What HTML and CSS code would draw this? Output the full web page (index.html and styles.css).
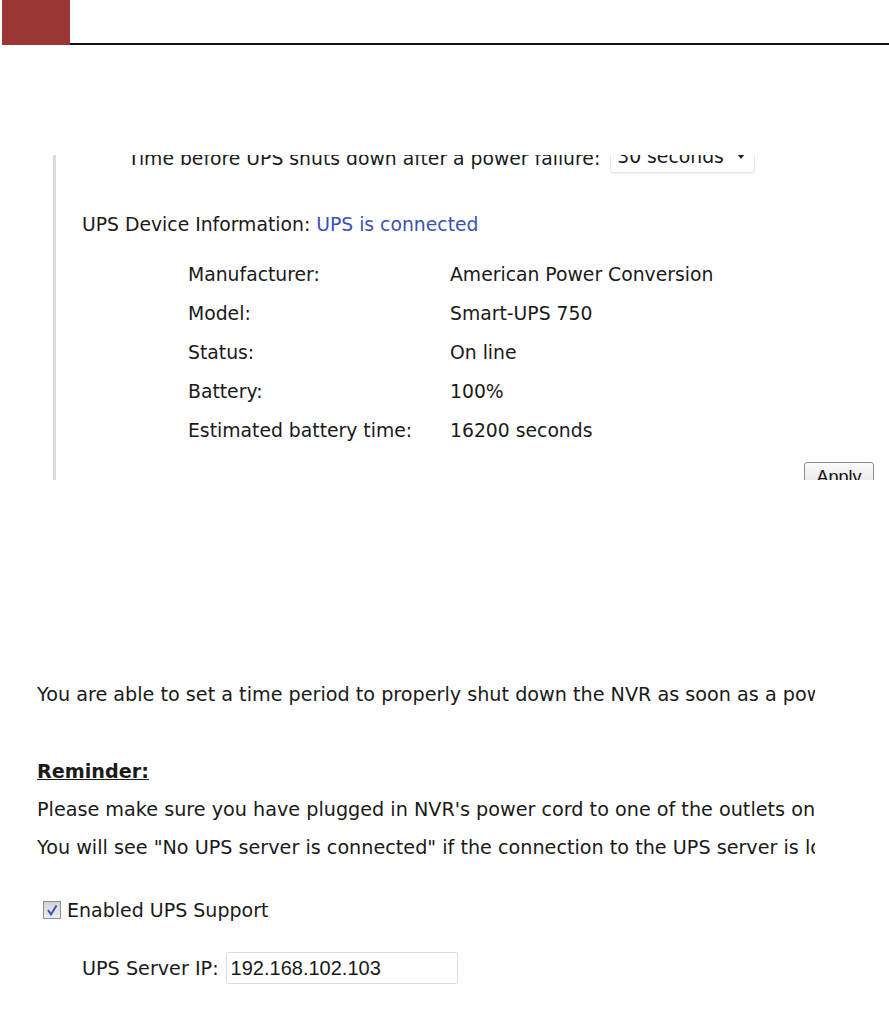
FILE: index.html
```html
<!DOCTYPE html>
<html lang="en">

<head>
    <meta http-equiv="Content-Type" content="text/html; charset=UTF-8" />
    <title>UPS Settings</title>
    <link rel="stylesheet" href="styles.css">
</head>

<body>
    <div class="pageHeader">
        <div class="pageMark"></div>
        <div class="pageRule"></div>
    </div>

    <!-- screenshot of the UPS panel, cropped top and bottom -->
    <div class="shot">
        <div class="shotInner">
            <div class="shutdownRow">
                <span>Time before UPS shuts down after a power failure:</span>
                <span class="fakeSelect">30 seconds<span class="caret"></span></span>
            </div>
            <div class="deviceRow">
                UPS Device Information: <span class="statusLink">UPS is connected</span>
            </div>
            <div class="infoList">
                <div class="infoLabel">Manufacturer:</div>
                <div class="infoValue">American Power Conversion</div>
                <div class="infoLabel">Model:</div>
                <div class="infoValue">Smart-UPS 750</div>
                <div class="infoLabel">Status:</div>
                <div class="infoValue">On line</div>
                <div class="infoLabel">Battery:</div>
                <div class="infoValue">100%</div>
                <div class="infoLabel">Estimated battery time:</div>
                <div class="infoValue">16200 seconds</div>
            </div>
            <div class="applyRow">
                <button class="applyButton">Apply</button>
            </div>
        </div>
    </div>

    <div class="doc">
        <p class="docLine">You are able to set a time period to properly shut down the NVR as soon as a power failure occurs.</p>
        <p class="docLine reminder"><b><u>Reminder:</u></b></p>
        <p class="docLine tight">Please make sure you have plugged in NVR's power cord to one of the outlets on the UPS.</p>
        <p class="docLine tight">You will see "No UPS server is connected" if the connection to the UPS server is lost.</p>

        <div class="checkRow">
            <span class="fakeCheck">
                <svg width="14" height="14" viewBox="0 0 14 14">
                    <path d="M3 7 L6 11.5 L11.5 2.5" fill="none" stroke="#3a52c8" stroke-width="2" />
                </svg>
            </span>
            <span>Enabled UPS Support</span>
        </div>

        <div class="ipRow">
            <span>UPS Server IP:</span>
            <span class="fakeInput">192.168.102.103</span>
        </div>
    </div>
</body>

</html>
```

FILE: styles.css
```css
body {
    margin: 0;
    background: #ffffff;
    color: #1a1a1a;
    font-family: "DejaVu Sans", Verdana, sans-serif;
    font-size: 18.8px;
}

.pageHeader {
    display: flex;
    height: 45px;
}
.pageMark {
    width: 68px;
    height: 45px;
    margin-left: 2px;
    background: #9a3634;
}
.pageRule {
    flex: 1;
    height: 43px;
    border-bottom: 2px solid #111111;
}

/* cropped panel screenshot */
.shot {
    margin-top: 110px;
    margin-left: 53px;
    height: 325px;
    overflow: hidden;
    border-left: 3px solid #dcdcdc;
}
.shotInner {
    margin-top: -10px;
}
.shutdownRow {
    display: flex;
    align-items: center;
    height: 26px;
    padding-left: 72px;
    white-space: nowrap;
}
.fakeSelect {
    position: relative;
    display: inline-block;
    box-sizing: border-box;
    width: 145px;
    height: 27px;
    margin-left: 10px;
    margin-top: 2px;
    padding: 0 0 0 6px;
    line-height: 20px;
    border: 1px solid #e4e7ee;
    border-radius: 3px;
    box-shadow: 0 1px 1px #eef0f5;
}
.caret {
    position: absolute;
    right: 9px;
    top: 7px;
    border-left: 4px solid transparent;
    border-right: 4px solid transparent;
    border-top: 5px solid #222222;
}
.deviceRow {
    height: 26px;
    line-height: 26px;
    margin-top: 41px;
    padding-left: 26px;
}
.statusLink {
    color: #3b52b4;
}
.infoList {
    display: grid;
    grid-template-columns: 262px auto;
    grid-auto-rows: 39px;
    align-items: center;
    margin-top: 17px;
    padding-left: 132px;
}
.applyRow {
    display: flex;
    justify-content: flex-end;
    margin-top: 12px;
    padding-right: 15px;
}
.applyButton {
    width: 70px;
    height: 30px;
    font-family: "Liberation Sans", Arial, sans-serif;
    font-size: 18px;
    color: #111111;
    background: linear-gradient(#fafafa, #e4e4e4);
    border: 1px solid #8d8d8d;
    border-radius: 3px;
    padding: 0;
}

/* manual text */
.doc {
    width: 778px;
    margin-left: 37px;
    margin-top: 202px;
    overflow: hidden;
    white-space: nowrap;
    font-size: 19.2px;
}
.docLine {
    margin: 0;
    height: 26px;
    line-height: 26px;
}
.reminder {
    margin-top: 51px;
}
.tight {
    margin-top: 12px;
}
.checkRow {
    display: flex;
    align-items: center;
    height: 26px;
    margin-top: 36px;
    padding-left: 6px;
    font-size: 19px;
}
.fakeCheck {
    display: inline-flex;
    align-items: center;
    justify-content: center;
    box-sizing: border-box;
    width: 18px;
    height: 18px;
    margin-right: 6px;
    border: 1px solid #8e8f8f;
    background: linear-gradient(#d2d2d2, #efefef);
}
.ipRow {
    display: flex;
    align-items: center;
    height: 32px;
    margin-top: 29px;
    padding-left: 45px;
}
.fakeInput {
    box-sizing: border-box;
    width: 232px;
    height: 32px;
    margin-left: 7px;
    padding-left: 4px;
    line-height: 30px;
    font-family: "Liberation Sans", Arial, sans-serif;
    font-size: 20px;
    border: 1px solid #dadde3;
    border-radius: 2px;
}
```
